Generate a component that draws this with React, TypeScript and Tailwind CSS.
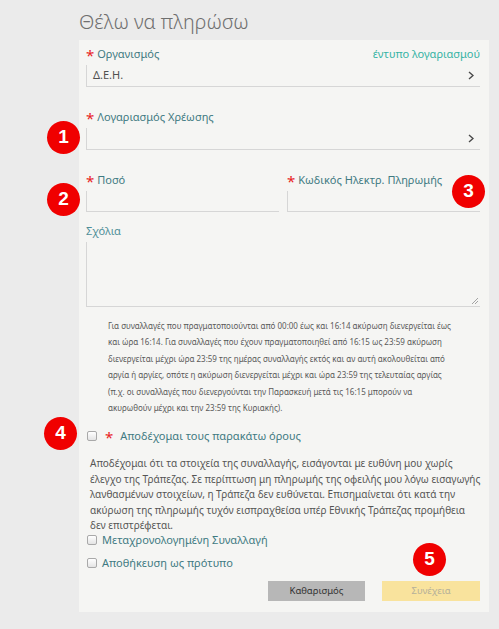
import React from "react";

const Star = () => (
  <span className="mr-[3px] inline-block translate-y-[1px] text-[15px] leading-none text-[#e8231f]">*</span>
);

const Chevron = () => (
  <svg width="6" height="9" viewBox="0 0 6 9" className="shrink-0">
    <polyline points="1,1 5,4.5 1,8" fill="none" stroke="#4a4a4a" strokeWidth="1.4" />
  </svg>
);

const Check = () => (
  <span className="inline-block h-[10px] w-[10px] shrink-0 rounded-[2px] border border-[#a9a9a9] bg-gradient-to-b from-white to-[#e4e4e4]" />
);

const Badge = ({ n, className }: { n: number; className: string }) => (
  <div
    className={`absolute flex h-[33px] w-[33px] items-center justify-center rounded-full bg-[#f00000] text-[19px] font-bold text-white ${className}`}
    style={{ fontFamily: '"Liberation Sans", Arial, sans-serif' }}
  >
    {n}
  </div>
);

export default function App() {
  return (
    <div
      className="relative h-[629px] w-[499px] overflow-hidden bg-[#ebebeb]"
      style={{ fontFamily: '"Noto Sans", "Open Sans", sans-serif' }}
    >
      {/* page heading */}
      <div className="pl-[79px] pt-[10px]">
        <h1 className="h-[30px] text-[20px] font-light leading-[24px] text-[#6f6f6f]">Θέλω να πληρώσω</h1>
      </div>

      {/* form panel */}
      <div className="ml-[79px] flex w-[410px] flex-col bg-[#f5f5f3] pb-[11px] pl-[7px] pr-[9px] pt-[6px] [&>*]:shrink-0">
        {/* Οργανισμός */}
        <div className="flex h-[16px] items-center justify-between text-[11px] leading-[16px]">
          <span className="flex items-center text-[#3f7a82]">
            <Star />
            Οργανισμός
          </span>
          <span className="text-[#35b3a4]">έντυπο λογαριασμού</span>
        </div>
        <div className="mt-[3px] flex h-[22px] items-center justify-between border-b border-l border-[#d6d6d6] pl-[6px] pr-[6px] text-[11px] text-[#505050]">
          <span>Δ.Ε.Η.</span>
          <Chevron />
        </div>

        {/* Λογαριασμός Χρέωσης */}
        <div className="mt-[22px] flex h-[16px] items-center text-[11px] leading-[16px] text-[#3f7a82]">
          <Star />
          Λογαριασμός Χρέωσης
        </div>
        <div className="mt-[3px] flex h-[22px] items-center justify-end border-b border-l border-[#d6d6d6] pr-[6px]">
          <Chevron />
        </div>

        {/* Ποσό / Κωδικός */}
        <div className="mt-[22px] grid grid-cols-[193px_193px] gap-x-[8px]">
          <div>
            <div className="flex h-[16px] items-center text-[11px] leading-[16px] text-[#3f7a82]">
              <Star />
              Ποσό
            </div>
            <div className="mt-[3px] h-[21px] border-b border-l border-[#d6d6d6]" />
          </div>
          <div>
            <div className="flex h-[16px] items-center text-[11px] leading-[16px] text-[#3f7a82]">
              <Star />
              Κωδικός Ηλεκτρ. Πληρωμής
            </div>
            <div className="mt-[3px] h-[21px] border-b border-l border-[#d6d6d6]" />
          </div>
        </div>

        {/* Σχόλια */}
        <div className="mt-[11px] h-[16px] text-[11px] leading-[16px] text-[#4f8f98]">Σχόλια</div>
        <div className="relative mt-[3px] h-[65px] border-b border-l border-[#d6d6d6]">
          <svg width="7" height="7" viewBox="0 0 7 7" className="absolute bottom-[2px] right-[2px]">
            <line x1="1" y1="7" x2="7" y2="1" stroke="#9a9a9a" strokeWidth="0.9" />
            <line x1="4" y1="7" x2="7" y2="4" stroke="#9a9a9a" strokeWidth="0.9" />
          </svg>
        </div>

        {/* cancellation notice */}
        <p className="mt-[11px] whitespace-nowrap pl-[22px] text-[8px] leading-[16.4px] text-[#5a5a5a]">
          Για συναλλαγές που πραγματοποιούνται από 00:00 έως και 16:14 ακύρωση διενεργείται έως
          <br />
          και ώρα 16:14. Για συναλλαγές που έχουν πραγματοποιηθεί από 16:15 ως 23:59 ακύρωση
          <br />
          διενεργείται μέχρι ώρα 23:59 της ημέρας συναλλαγής εκτός και αν αυτή ακολουθείται από
          <br />
          αργία ή αργίες, οπότε η ακύρωση διενεργείται μέχρι και ώρα 23:59 της τελευταίας αργίας
          <br />
          (π.χ. οι συναλλαγές που διενεργούνται την Παρασκευή μετά τις 16:15 μπορούν να
          <br />
          ακυρωθούν μέχρι και την 23:59 της Κυριακής).
        </p>

        {/* terms */}
        <div className="mt-[12px] flex h-[16px] items-center pl-[1px] text-[11px] leading-[16px] text-[#3f7a82]">
          <Check />
          <span className="ml-[8px] mr-[7px] inline-block translate-y-[1px] text-[15px] leading-none text-[#e8231f]">*</span>
          Αποδέχομαι τους παρακάτω όρους
        </div>
        <p className="mt-[12px] whitespace-nowrap pl-[4px] text-[10px] leading-[15.5px] text-[#555]">
          Αποδέχομαι ότι τα στοιχεία της συναλλαγής, εισάγονται με ευθύνη μου χωρίς
          <br />
          έλεγχο της Τράπεζας. Σε περίπτωση μη πληρωμής της οφειλής μου λόγω εισαγωγής
          <br />
          λανθασμένων στοιχείων, η Τράπεζα δεν ευθύνεται. Επισημαίνεται ότι κατά την
          <br />
          ακύρωση της πληρωμής τυχόν εισπραχθείσα υπέρ Εθνικής Τράπεζας προμήθεια
          <br />
          δεν επιστρέφεται.
        </p>

        <div className="flex h-[12px] items-center pl-[1px] text-[11px] leading-[12px] text-[#3f7a82]">
          <Check />
          <span className="ml-[5px]">Μεταχρονολογημένη Συναλλαγή</span>
        </div>
        <div className="mt-[11px] flex h-[12px] items-center pl-[1px] text-[11px] leading-[12px] text-[#3f7a82]">
          <Check />
          <span className="ml-[5px]">Αποθήκευση ως πρότυπο</span>
        </div>

        {/* actions */}
        <div className="mt-[12px] flex justify-end gap-[17px]">
          <button className="h-[20px] w-[97px] bg-[#b7b7b7] text-[9.5px] text-[#333]">Καθαρισμός</button>
          <button className="h-[20px] w-[98px] bg-[#f9e39d] text-[9.5px] text-[#b5b09a]">Συνέχεια</button>
        </div>
      </div>

      {/* numbered callouts */}
      <Badge n={1} className="left-[47px] top-[121px]" />
      <Badge n={2} className="left-[47px] top-[183px]" />
      <Badge n={3} className="left-[452px] top-[175px]" />
      <Badge n={4} className="left-[44px] top-[417px]" />
      <Badge n={5} className="left-[413px] top-[543px]" />
    </div>
  );
}
